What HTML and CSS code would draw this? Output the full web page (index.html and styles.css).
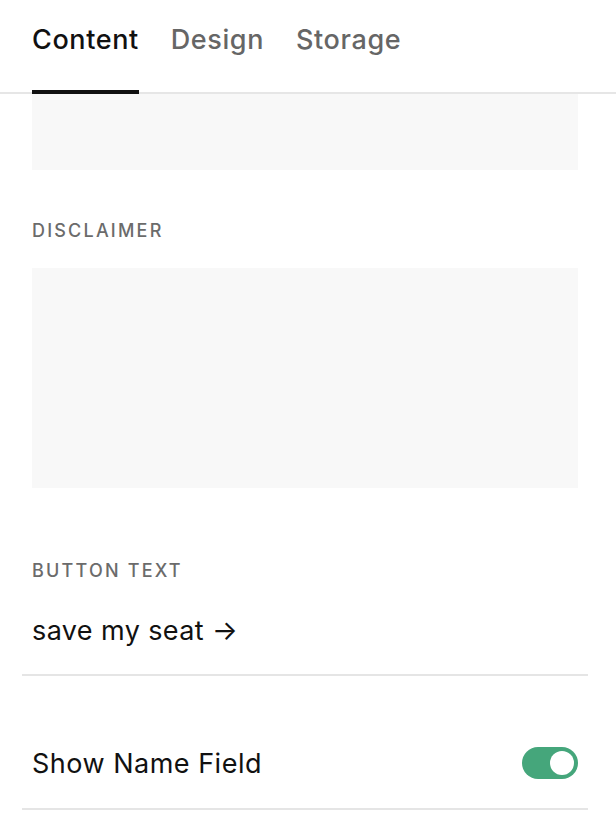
FILE: index.html
```html
<!DOCTYPE html>
<html>
<head>
<meta charset="utf-8">
<link rel="stylesheet" href="styles.css">
</head>
<body>
<div class="panel">
  <nav class="tabbar">
    <div class="tab active">Content</div>
    <div class="tab">Design</div>
    <div class="tab">Storage</div>
  </nav>
  <div class="fields">
    <div class="box box-short"></div>
    <div class="label label-disclaimer">DISCLAIMER</div>
    <div class="box box-tall"></div>
    <div class="label label-button">BUTTON TEXT</div>
    <div class="input-row">save my seat →</div>
    <div class="toggle-row">
      <span class="toggle-label">Show Name Field</span>
      <span class="toggle on"><span class="knob"></span></span>
    </div>
  </div>
</div>
</body>
</html>
```
FILE: styles.css
```css
html, body {
  margin: 0;
  padding: 0;
  background: #fff;
}
body {
  font-family: Inter, "Liberation Sans", sans-serif;
  color: #111;
}
.panel {
  width: 616px;
}
.tabbar {
  display: flex;
  align-items: flex-start;
  gap: 32px;
  height: 94px;
  box-sizing: border-box;
  padding-left: 32px;
  border-bottom: 2px solid #e6e6e6;
}
.tab {
  box-sizing: border-box;
  height: 94px;
  padding-top: 24px;
  font-size: 27px;
  line-height: 32px;
  font-weight: 500;
  color: #666;
  border-bottom: 4px solid transparent;
  letter-spacing: 0.6px;
}
.tab.active {
  color: #111;
  border-bottom-color: #111;
}
.fields {
  display: flex;
  flex-direction: column;
  margin: 0 28px 0 22px;
}
.box {
  background: #f8f8f8;
  margin: 0 10px;
}
.box-short {
  height: 76px;
}
.box-tall {
  height: 220px;
  margin-top: 27px;
}
.label {
  padding-left: 10px;
  font-size: 18px;
  line-height: 20px;
  font-weight: 500;
  letter-spacing: 2.2px;
  color: #6b6b6b;
}
.label-disclaimer {
  margin-top: 51px;
}
.label-button {
  margin-top: 73px;
}
.input-row {
  box-sizing: border-box;
  height: 95px;
  padding: 34px 10px 0;
  font-size: 27px;
  line-height: 32px;
  letter-spacing: 0.4px;
  border-bottom: 2px solid #e5e5e5;
}
.toggle-row {
  display: flex;
  align-items: center;
  justify-content: space-between;
  padding: 71px 10px 29px;
  border-bottom: 2px solid #e5e5e5;
}
.toggle-label {
  font-size: 27px;
  line-height: 32px;
  letter-spacing: 0.5px;
  position: relative;
  top: 1px;
}
.toggle {
  display: flex;
  align-items: center;
  justify-content: flex-end;
  box-sizing: border-box;
  width: 56px;
  height: 32px;
  padding: 4px;
  border-radius: 16px;
  background: #45a67b;
}
.knob {
  width: 24px;
  height: 24px;
  border-radius: 50%;
  background: #fff;
}
```
